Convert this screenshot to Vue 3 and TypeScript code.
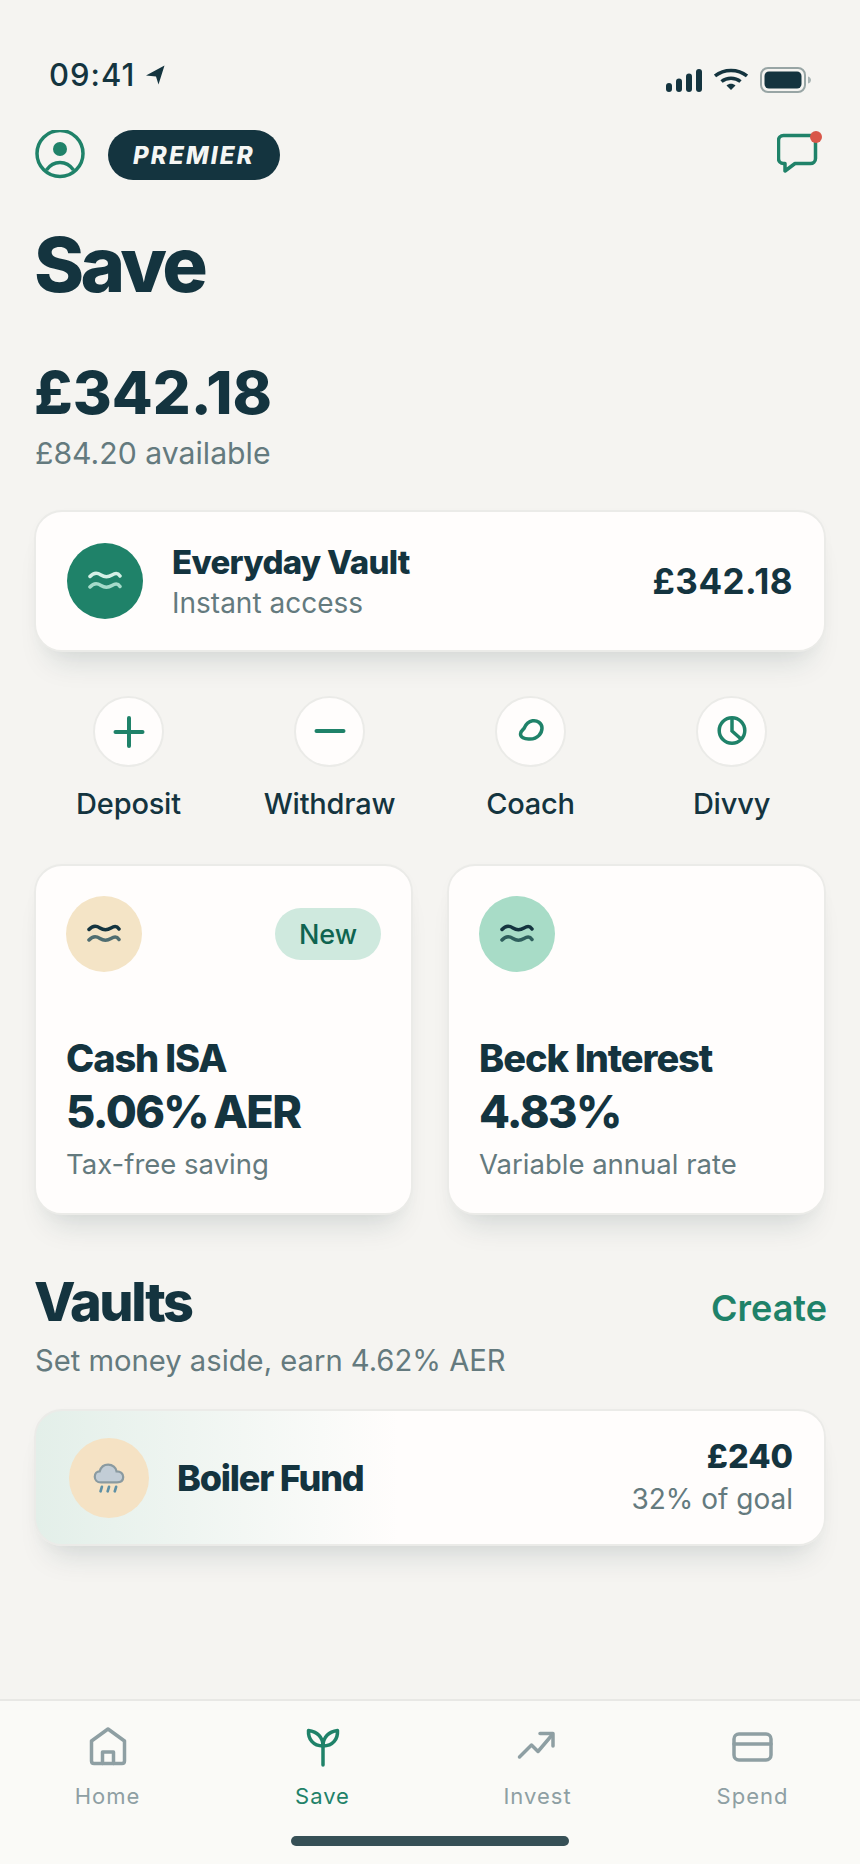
<script setup lang="ts">
const actions = ['Deposit', 'Withdraw', 'Coach', 'Divvy']
const tabs = ['Home', 'Save', 'Invest', 'Spend']
</script>

<template>
  <div class="screen">
    <div class="status">
      <div class="time">
        <span>09:41</span>
        <svg width="20" height="20" viewBox="0 0 20 20"><path d="M1 10.500 19.500 .5 13.500 19.500 11 11.500Z" fill="#14343f" /></svg>
      </div>
      <div class="sys">
        <svg width="36" height="24" viewBox="0 0 36 24" fill="#14343f">
          <rect x="0" y="15" width="6" height="9" rx="3" /><rect x="10" y="10.500" width="6" height="13.500" rx="3" />
          <rect x="20" y="5.500" width="6" height="18.500" rx="3" /><rect x="30" y="1" width="6" height="23" rx="3" />
        </svg>
        <svg width="34" height="24" viewBox="0 0 34 24" fill="none" stroke="#14343f" stroke-width="3.500">
          <path d="M1 8C10 .5 24 .5 33 8" /><path d="M7.500 13.500C13 9 21 9 26.500 13.500" />
          <path d="M12.500 17.500 17 22 21.500 17.500C19 15 15 15 12.500 17.500Z" fill="#14343f" stroke="none" />
        </svg>
        <svg width="52" height="26" viewBox="0 0 52 26">
          <rect x="1" y="1" width="44" height="24" rx="7" fill="none" stroke="#98a5a5" stroke-width="2" />
          <rect x="4.500" y="4.500" width="37" height="17" rx="4.500" fill="#14343f" />
          <path d="M48 9.500C50 10 51 11.500 51 13S50 16 48 16.500Z" fill="#a9b4b4" />
        </svg>
      </div>
    </div>

    <div class="top">
      <svg class="avatar" width="50" height="50" viewBox="0 0 50 50" fill="none">
        <circle cx="25" cy="23.500" r="23" stroke="#1f8269" stroke-width="3.500" />
        <circle cx="25" cy="19" r="7" fill="#1f8269" />
        <path d="M11.500 40C15 35 20 32.500 25 32.500S35 35 38.500 40" stroke="#1f8269" stroke-width="3.500" />
      </svg>
      <span class="premier">PREMIER</span>
      <span class="grow"></span>
      <div class="chat">
        <svg width="46" height="46" viewBox="0 0 46 46" fill="none">
          <path d="M6.500 3.500H33.500C36 3.500 38.500 5.500 38.500 8.500V26.500C38.500 29.500 36 31.500 33.500 31.500H18L8 39V31.500H6.500C3.500 31.500 1.500 29.500 1.500 26.500V8.500C1.500 5.500 3.500 3.500 6.500 3.500Z" stroke="#1f8269" stroke-width="3.500" stroke-linejoin="round" />
        </svg>
        <i class="dot"></i>
      </div>
    </div>

    <h1 class="title">Save</h1>
    <div class="balance">£342.18</div>
    <div class="avail">£84.20 available</div>

    <div class="card main">
      <div class="ic big green">
        <svg width="34" height="22" viewBox="0 0 34 22" fill="none" stroke-width="3.500" stroke-linecap="round">
          <path d="M2 6.500C6 2 10 3 13 5S20 7.500 24 5 30 3 32 6" stroke="#d5f0e6" />
          <path d="M2 17C6 12.500 10 13.500 13 15.500S20 18 24 15.500 30 13.500 32 16.500" stroke="#a5dbca" />
        </svg>
      </div>
      <div class="mainText">
        <div class="mainName">Everyday Vault</div>
        <div class="mainSub">Instant access</div>
      </div>
      <div class="mainAmt">£342.18</div>
    </div>

    <div class="actions">
      <div v-for="(a, i) in actions" :key="a" class="action">
        <div class="round">
          <svg width="34" height="34" viewBox="0 0 34 34" fill="none" stroke="#1f8269" stroke-width="4" stroke-linecap="round">
            <template v-if="i === 0"><path d="M17 3V31" /><path d="M3.500 17H30.500" /></template>
            <path v-else-if="i === 1" d="M3.500 16H30.500" />
            <path v-else-if="i === 2" d="M18.500 5.800C23 5 28 8 28 13 28 18 24 24 16 24 10 24.500 6.500 22 6.500 19 6.500 16.500 8.500 15 10 13.500 11.500 10 14 6.500 18.500 5.800Z" stroke-width="3.500" />
            <template v-else><circle cx="17" cy="15.500" r="12.800" stroke-width="3.500" /><path d="M17 4V16L26 24" stroke-width="3.500" /></template>
          </svg>
        </div>
        <span class="actionLabel">{{ a }}</span>
      </div>
    </div>

    <div class="duo">
      <div class="card tile">
        <div class="tileTop">
          <div class="ic big sand">
            <svg width="34" height="22" viewBox="0 0 34 22" fill="none" stroke-width="3.500" stroke-linecap="round">
              <path d="M2 6.500C6 2 10 3 13 5S20 7.500 24 5 30 3 32 6" stroke="#14343f" />
              <path d="M2 17C6 12.500 10 13.500 13 15.500S20 18 24 15.500 30 13.500 32 16.500" stroke="#4f6d70" />
            </svg>
          </div>
          <span class="pill">New</span>
        </div>
        <div class="tileName">Cash ISA</div>
        <div class="tileRate">5.06% AER</div>
        <div class="tileSub">Tax-free saving</div>
      </div>
      <div class="card tile">
        <div class="tileTop">
          <div class="ic big mint">
            <svg width="34" height="22" viewBox="0 0 34 22" fill="none" stroke-width="3.500" stroke-linecap="round">
              <path d="M2 6.500C6 2 10 3 13 5S20 7.500 24 5 30 3 32 6" stroke="#14343f" />
              <path d="M2 17C6 12.500 10 13.500 13 15.500S20 18 24 15.500 30 13.500 32 16.500" stroke="#2f5f5d" />
            </svg>
          </div>
        </div>
        <div class="tileName">Beck Interest</div>
        <div class="tileRate">4.83%</div>
        <div class="tileSub">Variable annual rate</div>
      </div>
    </div>

    <div class="vaultHead">
      <h2>Vaults</h2>
      <span class="create">Create</span>
    </div>
    <div class="vaultSub">Set money aside, earn 4.62% AER</div>

    <div class="card vault">
      <div class="ic vaultIc">
        <svg width="32" height="32" viewBox="0 0 36 34">
          <path d="M9 22C4.500 22 2 19 2 15.500S4.500 9.500 7.500 9.500C9 4.500 13 2 17 2 22 2 26 5.500 26.500 9.500 31 9.500 34 12 34 16S31 22 27 22Z" fill="#c2cdd6" stroke="#8a9aa0" stroke-width="2.500" />
          <path d="M10 27 8.500 32M18 27 16.500 32M26 27 24.500 32" stroke="#5e90a5" stroke-width="3" stroke-linecap="round" />
        </svg>
      </div>
      <div class="vaultName">Boiler Fund</div>
      <div class="vaultRight">
        <div class="vaultAmt">£240</div>
        <div class="vaultGoal">32% of goal</div>
      </div>
    </div>

    <div class="grow"></div>

    <nav class="tabs">
      <div v-for="(t, i) in tabs" :key="t" class="tab" :class="{ on: i === 1 }">
        <svg width="44" height="44" viewBox="0 0 44 44" fill="none" stroke="currentColor" stroke-width="3.500" stroke-linecap="round" stroke-linejoin="round">
          <template v-if="i === 0">
            <path d="M22 4 38.500 16V36C38.500 37.500 37.500 38.500 36 38.500H8C6.500 38.500 5.500 37.500 5.500 36V16Z" />
            <path d="M16.500 38.500V27H27.500V38.500" />
          </template>
          <template v-else-if="i === 1">
            <path d="M22 40V20" />
            <path d="M22 21C12 21 7 14 7.500 5.500 16 6.500 22 12 22 21Z" />
            <path d="M22 21C32 21 37 14 36.500 5.500 28 6.500 22 12 22 21Z" />
          </template>
          <template v-else-if="i === 2">
            <path d="M3.500 32 15.500 20 22 26.500 36 10" />
            <path d="M24 8.500H37V21" />
          </template>
          <template v-else>
            <rect x="3" y="9" width="37" height="26" rx="5" />
            <path d="M3 19H40" />
          </template>
        </svg>
        <span>{{ t }}</span>
      </div>
      <i class="home"></i>
    </nav>
  </div>
</template>

<style>
html, body { margin: 0; padding: 0; background: #f5f4f1; }
</style>

<style scoped>
.screen {
  width: 860px;
  height: 1864px;
  box-sizing: border-box;
  display: flex;
  flex-direction: column;
  background: #f5f4f1;
  color: #14343f;
  font-family: Inter, "Noto Sans", sans-serif;
  overflow: hidden;
}
.status {
  display: flex;
  justify-content: space-between;
  align-items: center;
  height: 40px;
  margin-top: 55px;
  padding: 0 48px 0 49px;
}
.time { display: flex; align-items: center; gap: 10px; font-size: 31px; font-weight: 500; letter-spacing: 1px; line-height: 40px; }
.sys { display: flex; align-items: center; gap: 12px; padding-top: 9px; }
.top {
  display: flex;
  align-items: center;
  gap: 23px;
  height: 50px;
  margin-top: 35px;
  padding: 0 36px 0 35px;
}
.premier {
  display: flex;
  align-items: center;
  justify-content: center;
  width: 172px;
  height: 50px;
  border-radius: 25px;
  background: #14343f;
  color: #f5f6f4;
  font-size: 24px;
  font-weight: 800;
  font-style: italic;
  letter-spacing: 2.200px;
}
.grow { flex: 1; }
.chat { position: relative; width: 46px; height: 46px; margin-right: 1px; }
.dot { position: absolute; left: 33px; top: -1px; width: 12px; height: 12px; border-radius: 50%; background: #d9574a; }
.title { margin: 42px 0 0 34px; font-size: 76px; line-height: 84px; font-weight: 800; letter-spacing: -3.600px; }
.balance { margin: 52px 0 0 34px; font-size: 59.500px; line-height: 68px; font-weight: 800; letter-spacing: 0; }
.avail { margin: 7px 0 0 35px; font-size: 30.200px; line-height: 40px; color: #647a7e; letter-spacing: 0; }
.card {
  box-sizing: border-box;
  background: #fffdfc;
  border: 2px solid #ebebe8;
  box-shadow: 0 24px 30px -16px rgba(20, 52, 63, 0.15), 0 4px 14px rgba(20, 52, 63, 0.02);
}
.main {
  display: flex;
  align-items: center;
  height: 142px;
  margin: 37px 34px 0;
  padding: 0 31px;
  border-radius: 28px;
}
.ic { display: flex; align-items: center; justify-content: center; border-radius: 50%; flex: none; }
.big { width: 76px; height: 76px; }
.green { background: #1f8269; }
.sand { background: #f4e4c6; }
.mint { background: #a8dcc7; }
.mainText { margin-left: 29px; flex: 1; padding-top: 4px; }
.mainName { font-size: 33px; line-height: 40px; font-weight: 800; letter-spacing: -0.700px; }
.mainSub { font-size: 28px; line-height: 42px; color: #647a7e; }
.mainAmt { font-size: 35px; font-weight: 700; letter-spacing: 0.500px; }
.actions {
  display: grid;
  grid-template-columns: repeat(4, 201px);
  margin: 44px 0 0 28px;
}
.action { display: flex; flex-direction: column; align-items: center; gap: 19px; }
.round {
  box-sizing: border-box;
  display: flex;
  align-items: center;
  justify-content: center;
  width: 71px;
  height: 71px;
  border-radius: 50%;
  background: #fffdfc;
  border: 2px solid #ebebe8;
}
.actionLabel { font-size: 29px; line-height: 36px; font-weight: 500; letter-spacing: -0.200px; }
.duo { display: grid; grid-template-columns: 379px 379px; gap: 34px; margin: 42px 34px 0; }
.tile { height: 351px; padding: 30px 30px 0; border-radius: 28px; }
.tileTop { display: flex; align-items: center; justify-content: space-between; height: 76px; }
.pill {
  display: flex;
  align-items: center;
  justify-content: center;
  width: 106px;
  height: 52px;
  border-radius: 26px;
  background: #cfe9de;
  color: #0f6450;
  font-size: 27px;
  font-weight: 500;
}
.tileName { margin-top: 64px; font-size: 38px; line-height: 44px; font-weight: 800; letter-spacing: -1.100px; }
.tileRate { margin-top: 6px; font-size: 45px; line-height: 52px; font-weight: 800; letter-spacing: -1.600px; word-spacing: -3px; }
.tileSub { margin-top: 8px; font-size: 27.500px; line-height: 36px; color: #647a7e; }
.vaultHead {
  display: flex;
  align-items: baseline;
  justify-content: space-between;
  margin: 57px 33px 0 34px;
}
h2 { margin: 0; font-size: 54px; line-height: 60px; font-weight: 800; letter-spacing: -2.300px; }
.create { font-size: 36px; font-weight: 600; color: #1f8269; }
.vaultSub { margin: 9px 0 0 35px; font-size: 29.200px; line-height: 40px; color: #647a7e; }
.vault {
  display: flex;
  align-items: center;
  height: 137px;
  margin: 28px 34px 0;
  padding: 0 31px 0 33px;
  border-radius: 28px;
  background: linear-gradient(90deg, #e3efe9 0%, #fffdfc 46%);
}
.vaultIc { width: 80px; height: 80px; background: #f5e2c4; }
.vaultName { flex: 1; margin-left: 28px; font-size: 36px; font-weight: 800; letter-spacing: -1.200px; }
.vaultRight { text-align: right; }
.vaultAmt { font-size: 32.500px; line-height: 42px; font-weight: 800; }
.vaultGoal { font-size: 28px; line-height: 42px; color: #647a7e; }
.tabs {
  position: relative;
  display: grid;
  grid-template-columns: repeat(4, 215px);
  height: 165px;
  box-sizing: border-box;
  padding-top: 24px;
  background: #fafaf7;
  border-top: 2px solid #e8e8e5;
}
.tab { display: flex; flex-direction: column; align-items: center; gap: 13px; color: #8e9fa3; font-size: 22px; font-weight: 400; letter-spacing: 1px; line-height: 28px; }
.tab.on { color: #1f8269; }
.home { position: absolute; left: 291px; bottom: 18px; width: 278px; height: 10px; border-radius: 5px; background: #365056; }
</style>
